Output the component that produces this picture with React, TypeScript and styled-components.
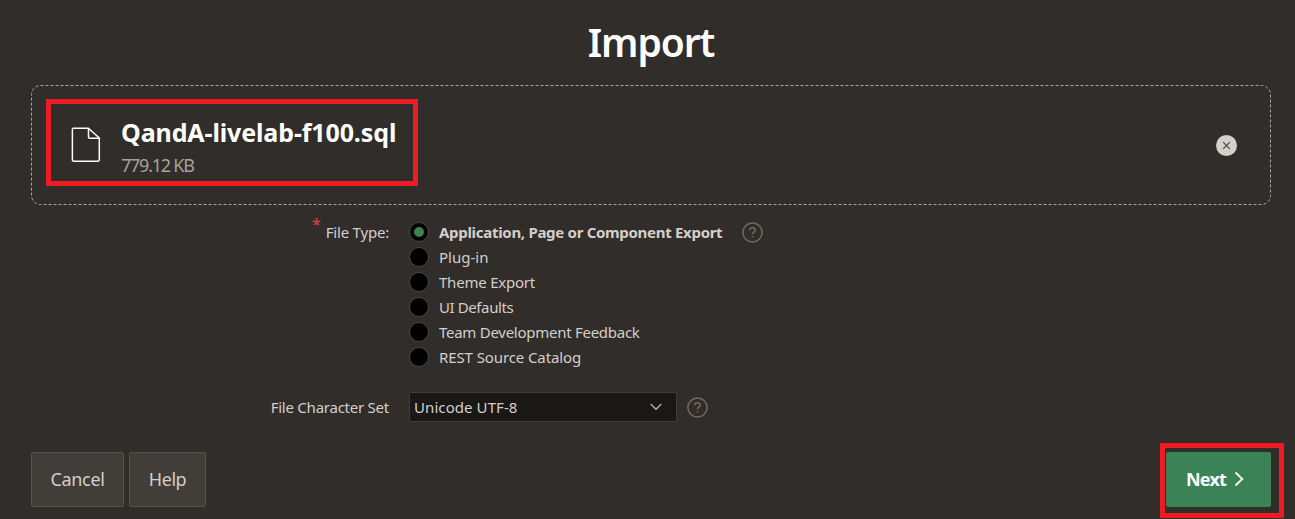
import React from 'react';
import styled, { createGlobalStyle } from 'styled-components';

const GlobalStyle = createGlobalStyle`
  * { box-sizing: border-box; }
  body { margin: 0; background: #312d2a; }
`;

const Page = styled.main`
  position: relative;
  width: 1295px;
  height: 519px;
  padding: 15px 24px 0 31px;
  overflow: hidden;
  background: #312d2a;
  color: #d4cfca;
  font-family: 'Noto Sans', 'Open Sans', sans-serif;
  font-size: 15px;
`;

const Text = styled.span<{ $track?: number }>`
  white-space: nowrap;
  letter-spacing: ${(p) => p.$track ?? 0}px;
`;

const Title = styled.h1`
  margin: 0;
  height: 70px;
  line-height: 53px;
  font-size: 39px;
  font-weight: 600;
  letter-spacing: -1.1px;
  text-align: center;
  color: #fff;
`;

const DropZone = styled.section`
  position: relative;
  display: flex;
  align-items: center;
  height: 120px;
  padding: 0 34px 0 40px;
`;

const DashedOutline = styled.svg`
  position: absolute;
  inset: 0;
  width: 100%;
  height: 100%;
`;

const FileInfo = styled.div`
  display: flex;
  flex-direction: column;
  flex: 1;
  margin-left: 20px;
  padding-top: 8px;
`;

const FileName = styled(Text)`
  font-size: 25px;
  line-height: 33px;
  font-weight: 700;
  color: #fff;
`;

const FileSize = styled(Text)`
  font-size: 18px;
  line-height: 33px;
  color: #a8a29c;
`;

const RemoveButton = styled.button`
  display: flex;
  width: 21px;
  height: 21px;
  padding: 0;
  border: 0;
  border-radius: 50%;
  background: #d4d0cc;
`;

const Form = styled.form`
  padding-top: 14px;
`;

const Field = styled.div<{ $top?: number }>`
  display: flex;
  align-items: flex-start;
  margin-top: ${(p) => p.$top ?? 0}px;
`;

const Label = styled.div<{ $line: number }>`
  display: flex;
  justify-content: flex-end;
  width: 358px;
  height: ${(p) => p.$line}px;
  margin-right: 20px;
  line-height: ${(p) => p.$line}px;
`;

const Required = styled.span`
  margin: -8px 5px 0 0;
  font-size: 16px;
  font-weight: 600;
  color: #c74634;
`;

const RadioGroup = styled.div`
  display: flex;
  flex-direction: column;
`;

const RadioRow = styled.label<{ $on?: boolean }>`
  display: flex;
  align-items: center;
  height: 25px;
  gap: 10px;
  font-weight: ${(p) => (p.$on ? 700 : 400)};
`;

const Radio = styled.span<{ $on?: boolean }>`
  display: flex;
  align-items: center;
  justify-content: center;
  width: 20px;
  height: 20px;
  border: 1px solid #4c4845;
  border-radius: 50%;
  background: #000;

  &::after {
    content: '';
    width: 10px;
    height: 10px;
    border-radius: 50%;
    background: ${(p) => (p.$on ? '#3b8256' : 'transparent')};
  }
`;

const Select = styled.div`
  display: flex;
  align-items: center;
  justify-content: space-between;
  width: 268px;
  height: 30px;
  margin-right: 10px;
  padding: 0 14px 0 4px;
  border: 1px solid #403c38;
  border-radius: 2px;
  background: #191816;
`;

const HelpSlot = styled.span<{ $left?: number; $top?: number }>`
  display: flex;
  margin-left: ${(p) => p.$left ?? 0}px;
  margin-top: ${(p) => p.$top ?? 0}px;
`;

const Footer = styled.footer`
  display: flex;
  gap: 5px;
  margin-top: 30px;
`;

const Button = styled.button<{ $width: number; $primary?: boolean }>`
  display: flex;
  align-items: center;
  justify-content: ${(p) => (p.$primary ? 'flex-start' : 'center')};
  gap: 8px;
  width: ${(p) => p.$width}px;
  height: 55px;
  padding: ${(p) => (p.$primary ? '0 0 1px 19px' : '0 0 2px')};
  margin-left: ${(p) => (p.$primary ? 'auto' : '0')};
  border: 1px solid ${(p) => (p.$primary ? '#3b8256' : '#55514c')};
  border-radius: 2px;
  background: ${(p) => (p.$primary ? '#3b8256' : '#413d38')};
  color: ${(p) => (p.$primary ? '#fff' : '#d4cfca')};
  font-family: inherit;
  font-size: 18px;
  font-weight: ${(p) => (p.$primary ? 700 : 400)};
`;

const Highlight = styled.div<{ $x: number; $y: number; $w: number; $h: number }>`
  position: absolute;
  left: ${(p) => p.$x}px;
  top: ${(p) => p.$y}px;
  width: ${(p) => p.$w}px;
  height: ${(p) => p.$h}px;
  border: 5px solid #ed1c24;
  pointer-events: none;
`;

const HelpIcon = () => (
  <svg width="21" height="21" viewBox="0 0 21 21" fill="none" stroke="#6f6a65" strokeWidth="1.5">
    <circle cx="10.5" cy="10.5" r="9.6" />
    <path d="M7.7 8.2C7.8 6.6 8.9 5.8 10.5 5.8S13.2 6.7 13.2 8.2C13.2 10 10.5 10.3 10.5 12.2" />
    <path d="M10.5 13.9V15.4" />
  </svg>
);

const options = [
  { label: 'Application, Page or Component Export', track: -0.3 },
  { label: 'Plug-in', track: 0 },
  { label: 'Theme Export', track: -0.22 },
  { label: 'UI Defaults', track: -0.4 },
  { label: 'Team Development Feedback', track: -0.27 },
  { label: 'REST Source Catalog', track: -0.1 },
];

export default function App() {
  return (
    <>
      <GlobalStyle />
      <Page>
        <Title>Import</Title>
        <DropZone>
          <DashedOutline>
            <rect x="0.5" y="0.5" width="1239" height="119" rx="9" fill="none" stroke="#a8a4a0" strokeDasharray="3 2" />
          </DashedOutline>
          <svg width="30" height="36" viewBox="0 0 30 36" fill="none" stroke="#fff" strokeWidth="1.5" strokeLinejoin="round">
            <path d="M2.2 1.2H17.5L28.3 11V32.8Q28.3 34.2 27 34.2H2.7Q1.4 34.2 1.4 32.8V2.2Q1.4 1.2 2.2 1.2Z" />
            <path d="M17.5 1.2V10Q17.5 11.2 18.7 11.2H28.3" />
          </svg>
          <FileInfo>
            <FileName $track={-0.12}>QandA-livelab-f100.sql</FileName>
            <FileSize $track={-1.25}>779.12 KB</FileSize>
          </FileInfo>
          <RemoveButton type="button" aria-label="Remove file">
            <svg width="21" height="21" viewBox="0 0 21 21" stroke="#4a4642" strokeWidth="1.2">
              <path d="M7.2 7.2L13.8 13.8M13.8 7.2L7.2 13.8" />
            </svg>
          </RemoveButton>
        </DropZone>
        <Form>
          <Field>
            <Label $line={27}>
              <Required>*</Required>
              <Text $track={-0.2}>File Type:</Text>
            </Label>
            <RadioGroup>
              {options.map((o, i) => (
                <RadioRow key={o.label} $on={i === 0}>
                  <Radio $on={i === 0} />
                  <Text $track={o.track}>{o.label}</Text>
                </RadioRow>
              ))}
            </RadioGroup>
            <HelpSlot $left={20} $top={3}>
              <HelpIcon />
            </HelpSlot>
          </Field>
          <Field $top={23}>
            <Label $line={30}>
              <Text $track={-0.24}>File Character Set</Text>
            </Label>
            <Select>
              <Text $track={0.08}>Unicode UTF-8</Text>
              <svg width="12" height="8" viewBox="0 0 12 8" fill="none" stroke="#b4afaa" strokeWidth="1.4">
                <path d="M0.7 1L6 6.3L11.3 1" />
              </svg>
            </Select>
            <HelpSlot $top={5}>
              <HelpIcon />
            </HelpSlot>
          </Field>
        </Form>
        <Footer>
          <Button $width={93}>
            <Text $track={-0.3}>Cancel</Text>
          </Button>
          <Button $width={77}>
            <Text $track={-0.4}>Help</Text>
          </Button>
          <Button $width={105} $primary>
            <Text $track={-0.8}>Next</Text>
            <svg width="10" height="16" viewBox="0 0 10 16" fill="none" stroke="#fff" strokeWidth="1.8">
              <path d="M1.5 1.5L8.3 8L1.5 14.5" />
            </svg>
          </Button>
        </Footer>
        <Highlight $x={46} $y={99} $w={372} $h={87} />
        <Highlight $x={1160} $y={443} $w={124} $h={75} />
      </Page>
    </>
  );
}
